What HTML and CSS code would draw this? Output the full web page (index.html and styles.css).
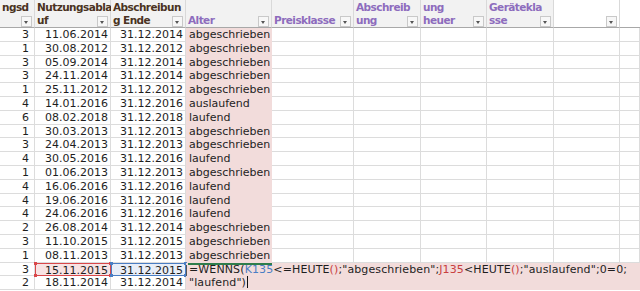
FILE: index.html
```html
<!DOCTYPE html>
<html lang="de">
<head>
<meta charset="utf-8">
<title>Tabelle</title>
<link rel="stylesheet" href="styles.css">
</head>
<body>
<div class="sheet">
  <div class="hd brown"><span class="l1">ngsd</span><span class="l2"></span><i class="dd"></i></div>
  <div class="hd brown"><span class="l1">Nutzungsabla</span><span class="l2">uf</span><i class="dd"></i></div>
  <div class="hd brown"><span class="l1">Abschreibun</span><span class="l2">g Ende</span><i class="dd"></i></div>
  <div class="hd purple"><span class="l2">Alter</span><i class="dd"></i></div>
  <div class="hd purple"><span class="l2">Preisklasse</span><i class="dd"></i></div>
  <div class="hd purple"><span class="l1">Abschreib</span><span class="l2">ung</span><i class="dd"></i></div>
  <div class="hd purple"><span class="l1">ung</span><span class="l2">heuer</span><i class="dd"></i></div>
  <div class="hd purple"><span class="l1">Gerätekla</span><span class="l2">sse</span><i class="dd"></i></div>
  <div class="hd blank"><i class="dd"></i></div>
  <div class="hd blank end"></div>

  <div class="c n1">3</div><div class="c n">11.06.2014</div><div class="c n">31.12.2014</div><div class="c alt">abgeschrieben</div><div class="c"></div><div class="c"></div><div class="c"></div><div class="c"></div><div class="c"></div><div class="c"></div>
  <div class="c n1">1</div><div class="c n">30.08.2012</div><div class="c n">31.12.2012</div><div class="c alt">abgeschrieben</div><div class="c"></div><div class="c"></div><div class="c"></div><div class="c"></div><div class="c"></div><div class="c"></div>
  <div class="c n1">3</div><div class="c n">05.09.2014</div><div class="c n">31.12.2014</div><div class="c alt">abgeschrieben</div><div class="c"></div><div class="c"></div><div class="c"></div><div class="c"></div><div class="c"></div><div class="c"></div>
  <div class="c n1">3</div><div class="c n">24.11.2014</div><div class="c n">31.12.2014</div><div class="c alt">abgeschrieben</div><div class="c"></div><div class="c"></div><div class="c"></div><div class="c"></div><div class="c"></div><div class="c"></div>
  <div class="c n1">1</div><div class="c n">25.11.2012</div><div class="c n">31.12.2012</div><div class="c alt">abgeschrieben</div><div class="c"></div><div class="c"></div><div class="c"></div><div class="c"></div><div class="c"></div><div class="c"></div>
  <div class="c n1">4</div><div class="c n">14.01.2016</div><div class="c n">31.12.2016</div><div class="c alt">auslaufend</div><div class="c"></div><div class="c"></div><div class="c"></div><div class="c"></div><div class="c"></div><div class="c"></div>
  <div class="c n1">6</div><div class="c n">08.02.2018</div><div class="c n">31.12.2018</div><div class="c alt">laufend</div><div class="c"></div><div class="c"></div><div class="c"></div><div class="c"></div><div class="c"></div><div class="c"></div>
  <div class="c n1">1</div><div class="c n">30.03.2013</div><div class="c n">31.12.2013</div><div class="c alt">abgeschrieben</div><div class="c"></div><div class="c"></div><div class="c"></div><div class="c"></div><div class="c"></div><div class="c"></div>
  <div class="c n1">3</div><div class="c n">24.04.2013</div><div class="c n">31.12.2013</div><div class="c alt">abgeschrieben</div><div class="c"></div><div class="c"></div><div class="c"></div><div class="c"></div><div class="c"></div><div class="c"></div>
  <div class="c n1">4</div><div class="c n">30.05.2016</div><div class="c n">31.12.2016</div><div class="c alt">laufend</div><div class="c"></div><div class="c"></div><div class="c"></div><div class="c"></div><div class="c"></div><div class="c"></div>
  <div class="c n1">1</div><div class="c n">01.06.2013</div><div class="c n">31.12.2013</div><div class="c alt">abgeschrieben</div><div class="c"></div><div class="c"></div><div class="c"></div><div class="c"></div><div class="c"></div><div class="c"></div>
  <div class="c n1">4</div><div class="c n">16.06.2016</div><div class="c n">31.12.2016</div><div class="c alt">laufend</div><div class="c"></div><div class="c"></div><div class="c"></div><div class="c"></div><div class="c"></div><div class="c"></div>
  <div class="c n1">4</div><div class="c n">19.06.2016</div><div class="c n">31.12.2016</div><div class="c alt">laufend</div><div class="c"></div><div class="c"></div><div class="c"></div><div class="c"></div><div class="c"></div><div class="c"></div>
  <div class="c n1">4</div><div class="c n">24.06.2016</div><div class="c n">31.12.2016</div><div class="c alt">laufend</div><div class="c"></div><div class="c"></div><div class="c"></div><div class="c"></div><div class="c"></div><div class="c"></div>
  <div class="c n1">2</div><div class="c n">26.08.2014</div><div class="c n">31.12.2014</div><div class="c alt">abgeschrieben</div><div class="c"></div><div class="c"></div><div class="c"></div><div class="c"></div><div class="c"></div><div class="c"></div>
  <div class="c n1">3</div><div class="c n">11.10.2015</div><div class="c n">31.12.2015</div><div class="c alt">abgeschrieben</div><div class="c"></div><div class="c"></div><div class="c"></div><div class="c"></div><div class="c"></div><div class="c"></div>
  <div class="c n1">1</div><div class="c n">08.11.2013</div><div class="c n">31.12.2013</div><div class="c alt">abgeschrieben</div><div class="c"></div><div class="c"></div><div class="c"></div><div class="c"></div><div class="c"></div><div class="c"></div>

  <div class="c n1">3</div>
  <div class="c n ref red">15.11.2015<span class="k tl"></span><span class="k tr"></span><span class="k bl"></span><span class="k br"></span></div>
  <div class="c n ref blue">31.12.2015<span class="k tl"></span><span class="k tr"></span><span class="k bl"></span><span class="k br"></span></div>
  <div class="edit">=WENNS(<span class="fb">K135</span>&lt;=HEUTE<span class="fr">()</span>;"abgeschrieben";<span class="fr">J135</span>&lt;HEUTE<span class="fr">()</span>;"auslaufend";0=0;<br>"laufend")<span class="caret"></span></div>

  <div class="c n1">2</div><div class="c n">18.11.2014</div><div class="c n">31.12.2014</div>
</div>
</body>
</html>
```
FILE: styles.css
```css
html, body {
  margin: 0;
  padding: 0;
  background: #ffffff;
}

.sheet {
  width: 640px;
  height: 291px;
  overflow: hidden;
  display: grid;
  grid-template-columns: 35px 76px 75px 86px 82px 67px 66px 67px 66px 20px;
  grid-template-rows: 28px repeat(19, 13.8px);
  font-family: "DejaVu Sans", Verdana, sans-serif;
  font-size: 11px;
  color: #1e1e1e;
}

.hd {
  position: relative;
  box-sizing: border-box;
  background: #f2f2f2;
  border-right: 1px solid #d9d9d9;
  border-bottom: 1px solid #a8a8a8;
  display: flex;
  flex-direction: column;
  justify-content: flex-end;
  padding: 0 0 0 2px;
  font-size: 10.5px;
  font-weight: bold;
  letter-spacing: -0.55px;
  line-height: 13px;
  white-space: nowrap;
}

.hd .l1, .hd .l2 {
  display: block;
  height: 13px;
}

.brown { color: #4a3322; }
.purple { color: #8d6cbd; }

.blank { background: #ffffff; }
.end { border-right: none; }

.dd {
  position: absolute;
  right: 2px;
  bottom: 0;
  width: 11px;
  height: 11px;
  box-sizing: border-box;
  border: 1px solid #c9c9c9;
  background: #f7f7f7;
}

.dd::after {
  content: "";
  position: absolute;
  left: 2px;
  top: 4px;
  width: 0;
  height: 0;
  border-left: 2.5px solid transparent;
  border-right: 2.5px solid transparent;
  border-top: 3px solid #555555;
}

.c {
  box-sizing: border-box;
  border-right: 1px solid #dcdcdc;
  border-bottom: 1px solid #dcdcdc;
  line-height: 13.8px;
  white-space: nowrap;
  overflow: hidden;
}

.n {
  text-align: right;
  padding-right: 2px;
}

.n1 {
  text-align: right;
  padding-right: 5px;
}

.alt {
  background: #f2dcdb;
  border-color: #f2dcdb;
  padding-left: 3px;
  overflow: visible;
}

.ref {
  position: relative;
  overflow: visible;
  border: 1px solid;
}

.red {
  background: #f7e3e3;
  border-color: #d9474a;
}

.blue {
  background: #e8eef8;
  border-color: #4a7ec4;
}

.k {
  position: absolute;
  width: 3px;
  height: 3px;
}

.red .k { background: #d9474a; }
.blue .k { background: #4a7ec4; }

.tl { left: -2px; top: -2px; }
.tr { right: -2px; top: -2px; }
.bl { left: -2px; bottom: -2px; }
.br { right: -2px; bottom: -2px; }

.edit {
  grid-column: 4 / -1;
  grid-row: 19 / 21;
  position: relative;
  background: #f2dcdb;
  padding-left: 3px;
  line-height: 13.8px;
  letter-spacing: 0.12px;
  white-space: nowrap;
  overflow: hidden;
}

.edit::before {
  content: "";
  position: absolute;
  left: 2px;
  top: 0;
  width: 84px;
  height: 2px;
  background: #2f7d4b;
}

.edit::after {
  content: "";
  position: absolute;
  left: 0;
  top: 2px;
  width: 1px;
  height: 11px;
  background: #555555;
}

.fb { color: #4a7ec4; }
.fr { color: #c8403f; }

.caret {
  display: inline-block;
  width: 1px;
  height: 12px;
  margin-left: 1px;
  vertical-align: -2px;
  background: #111111;
}
```
